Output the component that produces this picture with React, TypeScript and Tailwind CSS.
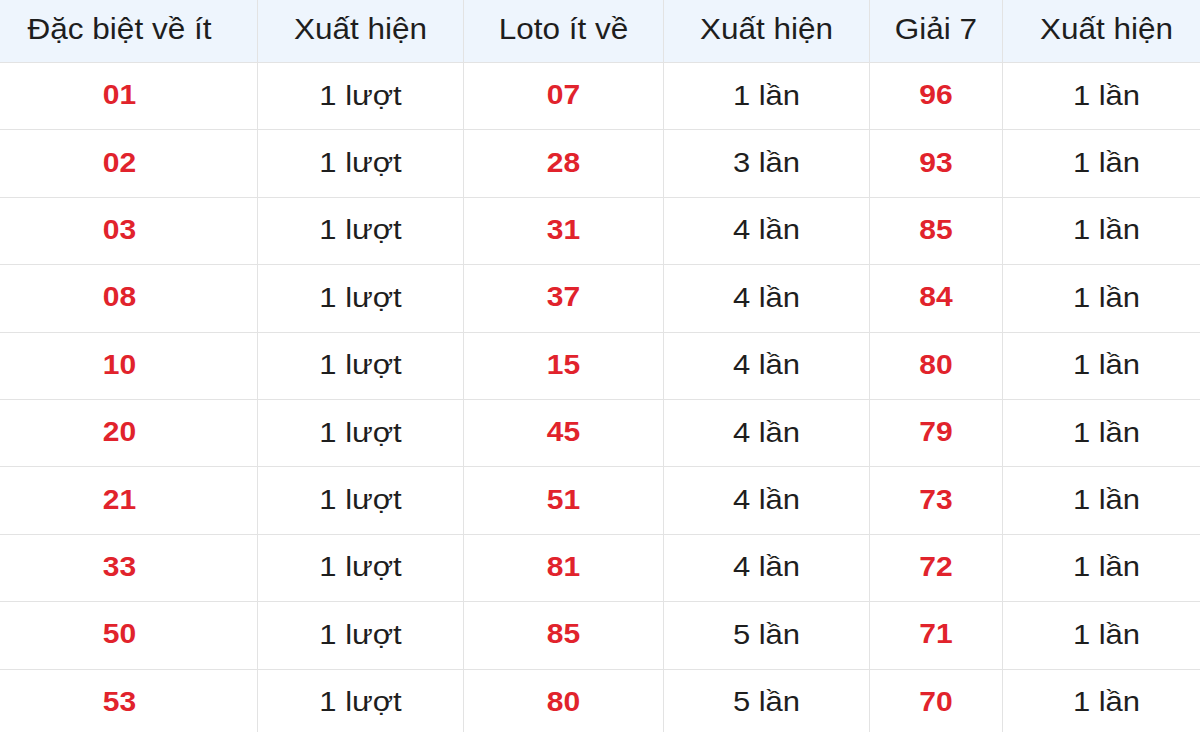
import React from "react";

const rows: [string, string, string, string, string, string][] = [
  ["01", "1 lượt", "07", "1 lần", "96", "1 lần"],
  ["02", "1 lượt", "28", "3 lần", "93", "1 lần"],
  ["03", "1 lượt", "31", "4 lần", "85", "1 lần"],
  ["08", "1 lượt", "37", "4 lần", "84", "1 lần"],
  ["10", "1 lượt", "15", "4 lần", "80", "1 lần"],
  ["20", "1 lượt", "45", "4 lần", "79", "1 lần"],
  ["21", "1 lượt", "51", "4 lần", "73", "1 lần"],
  ["33", "1 lượt", "81", "4 lần", "72", "1 lần"],
  ["50", "1 lượt", "85", "5 lần", "71", "1 lần"],
  ["53", "1 lượt", "80", "5 lần", "70", "1 lần"],
];

const headers = ["Đặc biệt về ít", "Xuất hiện", "Loto ít về", "Xuất hiện", "Giải 7", "Xuất hiện"];

export default function App() {
  return (
    <div
      className="w-[1200px] h-[732px] overflow-hidden bg-white"
      style={{ fontFamily: '"Liberation Sans", Arial, sans-serif' }}
    >
      <div className="ml-[-18px] w-[1229px] grid grid-cols-[276px_206px_200px_206px_133px_208px] grid-rows-[63px_repeat(10,67.4px)]">
        {headers.map((h, i) => (
          <div
            key={"h" + i}
            className="flex items-center justify-center bg-[#eef5fd] border-b border-r border-[#e3e3e3] text-[31.5px] text-[#1e1e1e] leading-none pb-[3px]"
          >
            <span className="inline-block scale-y-[0.92]">{h}</span>
          </div>
        ))}
        {rows.map((r, ri) =>
          r.map((c, ci) => (
            <div
              key={ri + "-" + ci}
              className={
                ci % 2 === 0
                  ? "flex items-center justify-center border-b border-r border-[#e3e3e3] text-[30px] font-bold text-[#e1232c] leading-none pb-[2px]"
                  : "flex items-center justify-center border-b border-r border-[#e3e3e3] text-[31px] text-[#1e1e1e] leading-none pb-[2px]"
              }
            >
              <span className="inline-block scale-y-[0.92]">{c}</span>
            </div>
          ))
        )}
      </div>
    </div>
  );
}
